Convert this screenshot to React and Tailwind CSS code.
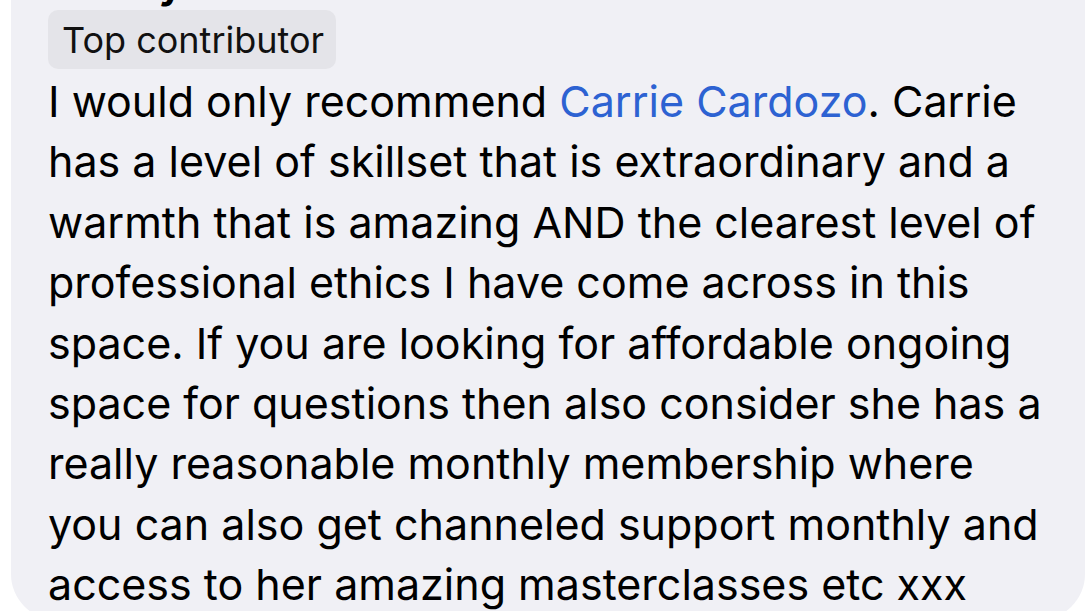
import React from 'react';

const lines = [
    null,
    'has a level of skillset that is extraordinary and a',
    'warmth that is amazing AND the clearest level of',
    'professional ethics I have come across in this',
    'space. If you are looking for affordable ongoing',
    'space for questions then also consider she has a',
    'really reasonable monthly membership where',
    'you can also get channeled support monthly and',
    'access to her amazing masterclasses etc xxx',
];

const App = () => {
    return (
        <div className="h-[611px] overflow-hidden bg-white" style={{ fontFamily: 'Inter, "Noto Sans", sans-serif' }}>
            <div className="ml-[11px] w-[1074px] h-[660px] -mt-[40px] bg-[#f0f0f5] rounded-b-[46px] pl-[37px]">
                <div className="text-[40px] font-bold leading-[48px] text-black">Ashley</div>

                <div className="mt-[2px] inline-flex h-[59px] items-center rounded-[10px] bg-[#e4e4e9] pl-[14px] pr-[12px] text-[36px] text-[#111]">
                    Top contributor
                </div>

                <div className="mt-[2px] text-[43px] leading-[60.4px] text-black">
                    {lines.map((line, i) => (
                        <div key={i} className="whitespace-nowrap">
                            {line === null ? (
                                <>
                                    I would only recommend <span className="text-[#2d62d2]">Carrie Cardozo</span>. Carrie
                                </>
                            ) : line}
                        </div>
                    ))}
                </div>
            </div>
        </div>
    );
};

export default App;
